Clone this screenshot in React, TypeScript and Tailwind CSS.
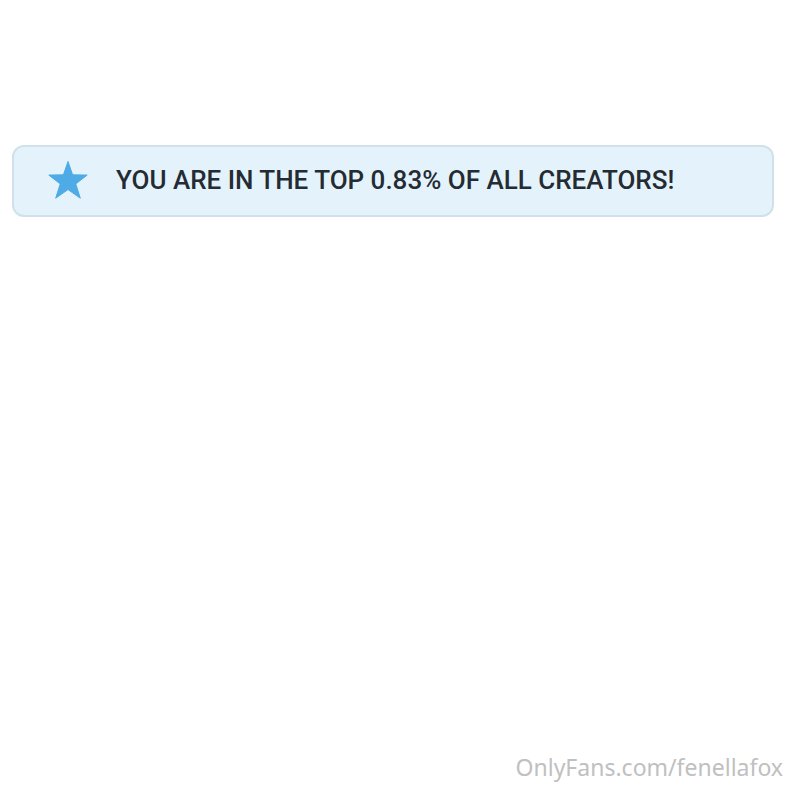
export default function App() {
  return (
    <div className="flex min-h-screen flex-col justify-between bg-white">
      <main className="px-3 pt-[145px]">
        <div className="mr-px flex h-18 items-center gap-7 rounded-xl border-2 border-[#d0e1ea] bg-[#e4f3fb] px-[34px] pb-0.5">
          <svg viewBox="0 0 40 38" className="h-[38px] w-10 shrink-0" fill="#4fabe6" stroke="#4fabe6" strokeWidth="1" strokeLinejoin="round" aria-hidden="true">
            <path d="M20 0.5 L24.6 13.8 L39.2 14.1 L27.8 22.9 L32.3 37.2 L20 28.6 L7.7 37.2 L12.2 22.9 L0.8 14.1 L15.4 13.8 Z" />
          </svg>
          <p className="font-['Roboto',sans-serif] text-[26px] leading-8 font-medium whitespace-nowrap text-[#252b33]">
            YOU ARE IN THE TOP 0.83% OF ALL CREATORS!
          </p>
        </div>
      </main>
      <footer className="px-1 pb-1 text-right font-['Noto_Sans',sans-serif] text-[23px] leading-8 text-[#c0c0c0]">
        OnlyFans.com/fenellafox
      </footer>
    </div>
  );
}
